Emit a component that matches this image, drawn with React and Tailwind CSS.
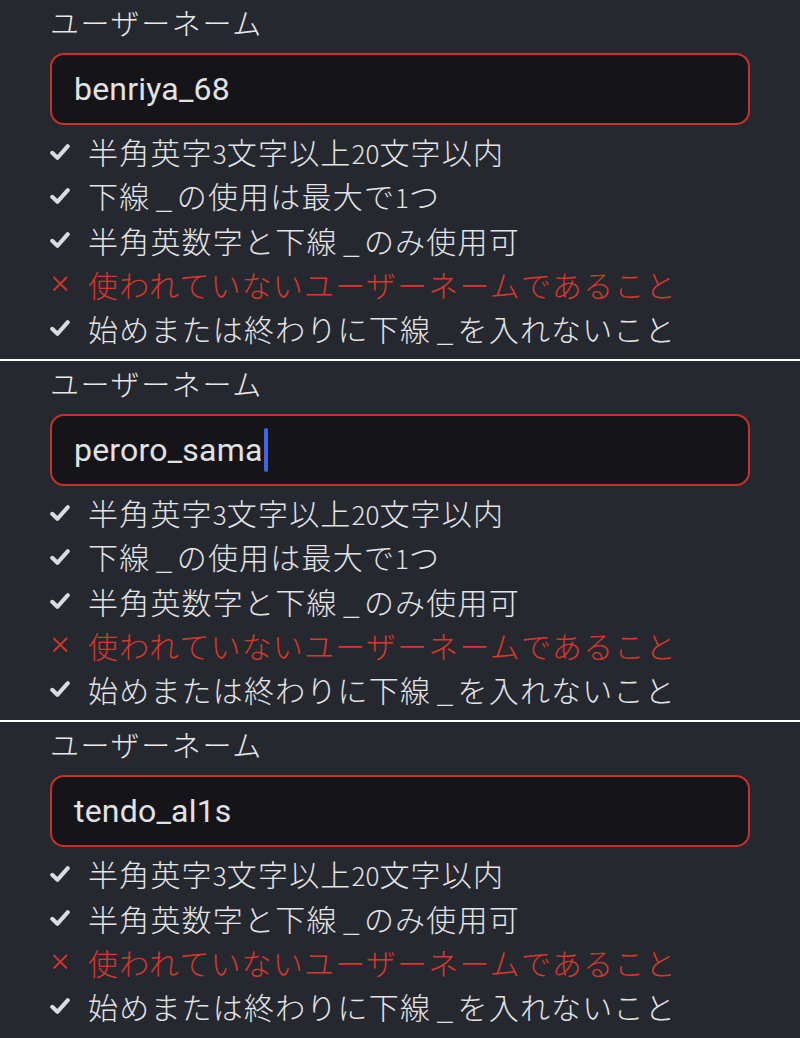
const RULES_FULL = [
  { ok: true, text: '半角英字3文字以上20文字以内' },
  { ok: true, text: '下線 _ の使用は最大で1つ' },
  { ok: true, text: '半角英数字と下線 _ のみ使用可' },
  { ok: false, text: '使われていないユーザーネームであること' },
  { ok: true, text: '始めまたは終わりに下線 _ を入れないこと' },
]

const RULES_SHORT = [RULES_FULL[0], RULES_FULL[2], RULES_FULL[3], RULES_FULL[4]]

const FIELDS = [
  { value: 'benriya_68', rules: RULES_FULL },
  { value: 'peroro_sama', rules: RULES_FULL, focused: true },
  { value: 'tendo_al1s', rules: RULES_SHORT },
]

function CheckIcon() {
  return (
    <svg width="20" height="18" viewBox="0 0 20 18" className="shrink-0">
      <path d="M2.2 9.8 L7.4 14.8 L17.8 3.2" fill="none" stroke="#dcdcdf" strokeWidth="4" strokeLinecap="round" strokeLinejoin="round" />
    </svg>
  )
}

function CrossIcon() {
  return (
    <svg width="20" height="18" viewBox="0 0 20 18" className="shrink-0">
      <path d="M3.5 2 L17 15.5 M17 2 L3.5 15.5" fill="none" stroke="#d6352b" strokeWidth="1.8" />
    </svg>
  )
}

// digits are set smaller than the kana, and " _ " sits tighter
function RuleText({ text }) {
  return text.split(/(\d+| _ )/).map((part, i) => {
    if (/^\d+$/.test(part)) {
      return <span key={i} className="text-[26px] tracking-normal">{part}</span>
    }
    if (part === ' _ ') {
      return <span key={i} className="tracking-[-1.2px]">{part}</span>
    }
    return <span key={i}>{part}</span>
  })
}

function UsernameField({ value, rules, focused }) {
  return (
    <div className="px-[50px] pb-[9px]">
      <div className="h-[44px] leading-[44px] text-[29px] tracking-[1.6px] font-light text-[#e8e8ea]">ユーザーネーム</div>
      <div className="mt-[9px] h-[72px] w-[700px] rounded-[14px] border-2 border-[#c9302a] bg-[#151519] pl-[22px] flex items-center">
        <span className="text-[32px] tracking-[0.2px] text-[#e2e2e4] font-['Roboto',sans-serif]">{value}</span>
        {focused && <span className="ml-[1px] h-[44px] w-[4px] rounded-sm bg-[#3d66e6]" />}
      </div>
      <ul className="mt-[5px]">
        {rules.map((r, i) => (
          <li key={i} className="flex items-center h-[44px]">
            <span className="w-[38px] flex items-center">{r.ok ? <CheckIcon /> : <CrossIcon />}</span>
            <span className={`text-[30px] leading-[44px] tracking-[1.2px] font-light whitespace-nowrap ${r.ok ? 'text-[#e4e4e6]' : 'text-[#d8372c]'}`}>
              <RuleText text={r.text} />
            </span>
          </li>
        ))}
      </ul>
    </div>
  )
}

export default function App() {
  return (
    <div className="w-[800px] h-[1038px] overflow-hidden bg-[#262830] font-['Noto_Sans_CJK_JP','Noto_Sans',sans-serif]">
      {FIELDS.map((f, i) => (
        <div key={i}>
          {i > 0 && <div className="h-[2px] bg-white" />}
          <UsernameField {...f} />
        </div>
      ))}
    </div>
  )
}
